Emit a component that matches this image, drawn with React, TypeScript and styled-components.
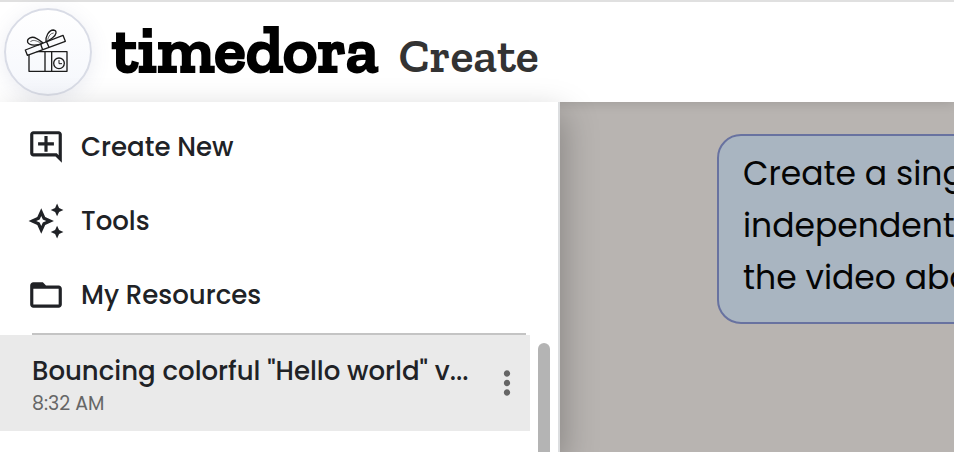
import React from "react";
import styled, { createGlobalStyle } from "styled-components";
import {
  MdFolderOpen,
  MdMoreVert,
  MdOutlineAddComment,
  MdOutlineAutoAwesome,
} from "react-icons/md";

const GlobalStyle = createGlobalStyle`
  *, *::before, *::after { box-sizing: border-box; }
  body {
    margin: 0;
    font-family: Poppins, Inter, "Noto Sans", sans-serif;
    color: #202226;
    background: #fff;
  }
`;

const Page = styled.div`
  display: flex;
  flex-direction: column;
  height: 100vh;
  overflow: hidden;
`;

const Header = styled.header`
  display: flex;
  align-items: center;
  gap: 20px;
  padding: 6px 4px;
  border-top: 2px solid #e0e0e0;
  background: #fff;
  box-shadow: 0 0 12px rgba(0, 0, 0, 0.16);
  position: relative;
  z-index: 1;
`;

const LogoLink = styled.a`
  display: flex;
  flex: none;
  width: 88px;
  height: 88px;
  border: 2px solid #d9dce6;
  border-radius: 50%;
  background: linear-gradient(#ffffff, #f5f7fc);
  box-shadow: 0 4px 20px rgba(90, 100, 150, 0.12);
  color: #1c1c1c;
`;

const Brand = styled.div`
  display: flex;
  align-items: baseline;
  gap: 20px;
  padding-bottom: 4px;
  font-family: "Zilla Slab", "DejaVu Serif Condensed", "DejaVu Serif", serif;
  line-height: 1;
  white-space: nowrap;
`;

const BrandName = styled.span`
  font-size: 66px;
  font-weight: 600;
  color: #000;
  -webkit-text-stroke: 2px #000;
`;

const Product = styled.h1`
  margin: 0;
  font-size: 48px;
  font-weight: 600;
  line-height: inherit;
  color: #333;
`;

const Body = styled.div`
  display: flex;
  flex: 1;
  min-height: 0;
`;

const Sidebar = styled.aside`
  display: flex;
  flex-direction: column;
  flex: none;
  width: 560px;
  border-right: 2px solid #dcdee0;
  background: #fff;
  box-shadow: 4px 12px 32px rgba(0, 0, 0, 0.26);
  position: relative;
  z-index: 2;
`;

const Menu = styled.nav`
  display: flex;
  flex-direction: column;
  margin: 0 32px;
  padding: 8px 0 1px;
  border-bottom: 2px solid #c4c4c4;
`;

const MenuButton = styled.button`
  display: flex;
  align-items: center;
  gap: 16px;
  height: 74px;
  margin-left: -5px;
  padding: 0;
  border: 0;
  background: none;
  color: inherit;
  font: inherit;
  font-size: 26px;
  font-weight: 500;
  text-align: left;
  cursor: pointer;

  svg { width: 38px; height: 38px; }
`;

const History = styled.div`
  display: flex;
  flex: 1;
  min-height: 0;
  gap: 8px;
`;

const HistoryList = styled.ul`
  flex: 1;
  min-width: 0;
  margin: 0;
  padding: 0;
  list-style: none;
`;

const HistoryItem = styled.li`
  display: flex;
  align-items: center;
  gap: 8px;
  height: 96px;
  padding: 0 4px 0 32px;
  background: #eaeaea;
`;

const HistoryLink = styled.a`
  flex: 1;
  min-width: 0;
  padding-top: 4px;
  color: inherit;
  text-decoration: none;
`;

const HistoryTitle = styled.span`
  display: block;
  font-size: 26px;
  font-weight: 500;
  line-height: 38px;
  white-space: nowrap;
`;

const HistoryTime = styled.time`
  display: block;
  font-size: 19px;
  line-height: 28px;
  color: #666;
`;

const MoreButton = styled.button`
  display: flex;
  padding: 0;
  border: 0;
  background: none;
  color: #666;
  cursor: pointer;

  svg { width: 38px; height: 38px; }
`;

const ScrollThumb = styled.div`
  flex: none;
  width: 12px;
  margin: 8px 8px 0 0;
  border-radius: 6px 6px 0 0;
  background: #b4b4b4;
`;

const Main = styled.main`
  flex: 1;
  min-width: 0;
  padding: 32px 0 32px 157px;
  background: #b8b4b1;
  overflow: hidden;
`;

const Message = styled.p`
  width: 720px;
  margin: 0;
  padding: 12px 24px 18px;
  border: 2px solid #6872a0;
  border-radius: 24px;
  background: #a9b5c1;
  color: #050505;
  font-size: 33px;
  line-height: 52px;
  white-space: pre-line;
`;

function GiftLogo() {
  return (
    <svg
      width="84"
      height="84"
      viewBox="20 30 252 252"
      fill="none"
      stroke="currentColor"
      strokeWidth="4"
      strokeLinejoin="round"
      aria-hidden="true"
    >
      <path d="M89 164V214H203V155H112M137 155V214M157 155V214" />
      <path d="M78 150L191 106L198 124L84 166Z" />
      <path d="M124 133L130 149M142 126L149 142" />
      <path d="M128 131C117 136 90 139 85 127C82 114 98 108 111 115C121 120 128 127 132 130" />
      <path d="M93 126C98 118 111 121 126 130" strokeWidth="2" />
      <path d="M140 126C138 109 148 91 162 90C175 91 171 106 159 114C153 119 145 122 140 126" />
      <path d="M145 119C148 108 153 100 163 99" strokeWidth="2" />
      <circle cx="179" cy="190" r="16" />
      <path d="M179 180V191H188" strokeWidth="3" />
    </svg>
  );
}

const menu = [
  { label: "Create New", Icon: MdOutlineAddComment },
  { label: "Tools", Icon: MdOutlineAutoAwesome },
  { label: "My Resources", Icon: MdFolderOpen },
];

const prompt = ["Create a sing", "independent", "the video abo"].join("\n");

export default function App() {
  return (
    <Page>
      <GlobalStyle />
      <Header>
        <LogoLink href="#" aria-label="timedora home">
          <GiftLogo />
        </LogoLink>
        <Brand>
          <BrandName>timedora</BrandName>
          <Product>Create</Product>
        </Brand>
      </Header>
      <Body>
        <Sidebar>
          <Menu>
            {menu.map(({ label, Icon }) => (
              <MenuButton key={label} type="button">
                <Icon aria-hidden="true" />
                {label}
              </MenuButton>
            ))}
          </Menu>
          <History>
            <HistoryList>
              <HistoryItem>
                <HistoryLink href="#">
                  <HistoryTitle>Bouncing colorful "Hello world" v...</HistoryTitle>
                  <HistoryTime>8:32 AM</HistoryTime>
                </HistoryLink>
                <MoreButton type="button" aria-label="More options">
                  <MdMoreVert aria-hidden="true" />
                </MoreButton>
              </HistoryItem>
            </HistoryList>
            <ScrollThumb />
          </History>
        </Sidebar>
        <Main>
          <Message>{prompt}</Message>
        </Main>
      </Body>
    </Page>
  );
}
